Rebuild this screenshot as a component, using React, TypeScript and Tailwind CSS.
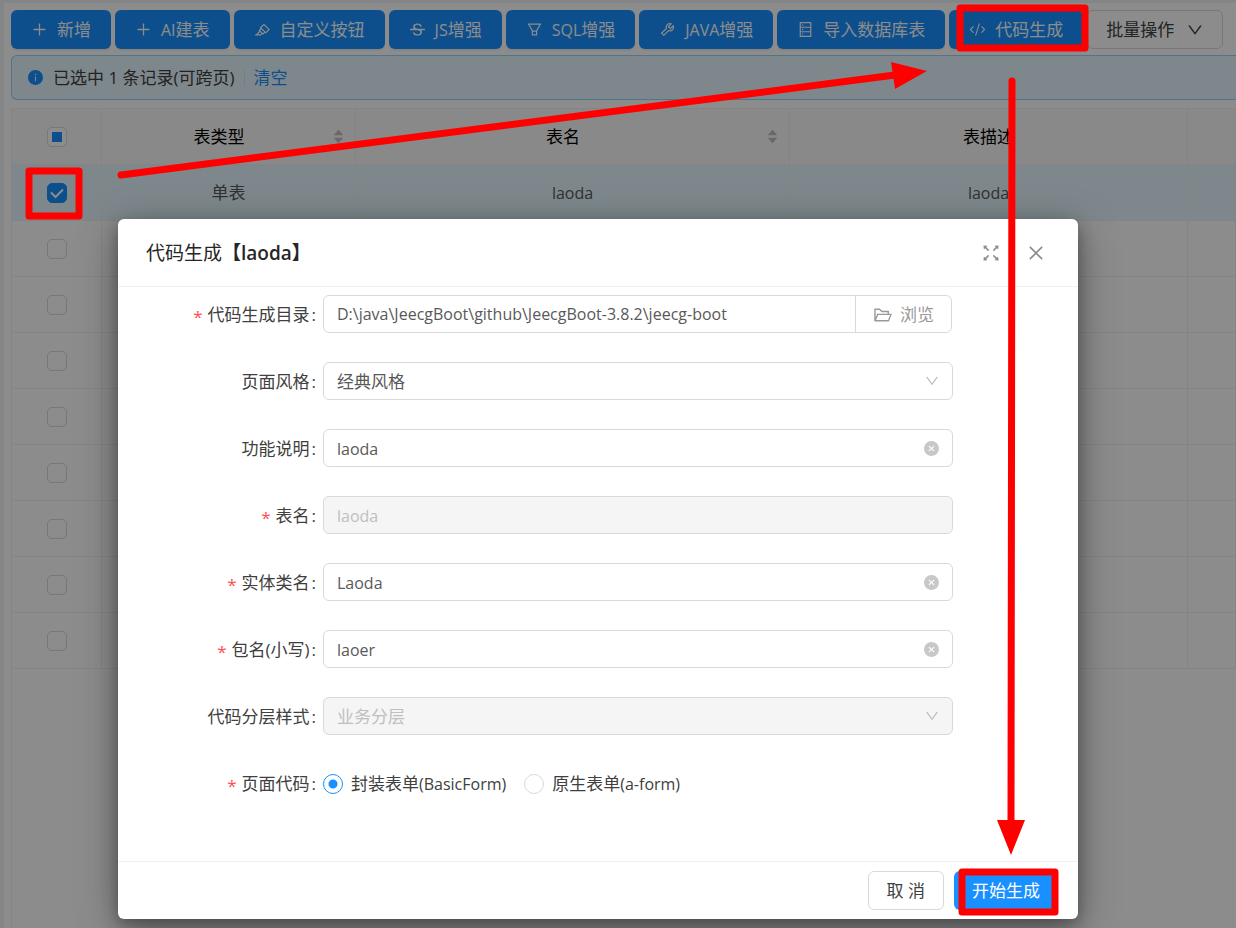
import { useState } from 'react';
import type { ReactNode } from 'react';
import type { IconType } from 'react-icons';
import {
  AiFillCaretDown,
  AiFillCaretUp,
  AiFillCloseCircle,
  AiFillInfoCircle,
  AiOutlineClose,
  AiOutlineDatabase,
  AiOutlineDown,
  AiOutlineFilter,
  AiOutlineFolderOpen,
  AiOutlineFullscreen,
  AiOutlineHighlight,
  AiOutlinePlus,
  AiOutlineStrikethrough,
  AiOutlineTool,
} from 'react-icons/ai';
import { CodeXml } from 'lucide-react';

interface ToolbarAction {
  prefix?: string;
  label: string;
  icon: IconType | typeof CodeXml;
}

const ACTIONS: ToolbarAction[] = [
  { label: '新增', icon: AiOutlinePlus },
  { prefix: 'AI', label: '建表', icon: AiOutlinePlus },
  { label: '自定义按钮', icon: AiOutlineHighlight },
  { prefix: 'JS', label: '增强', icon: AiOutlineStrikethrough },
  { prefix: 'SQL', label: '增强', icon: AiOutlineFilter },
  { prefix: 'JAVA', label: '增强', icon: AiOutlineTool },
  { label: '导入数据库表', icon: AiOutlineDatabase },
  { label: '代码生成', icon: CodeXml },
];

const EMPTY_ROWS = [2, 3, 4, 5, 6, 7, 8, 9];

const CELL = 'border-r border-b border-[#f0f0f0]';
const FIELD =
  'h-[38px] w-full rounded-md border border-[#d9d9d9] bg-white px-[13px] text-base text-[#595959] outline-none disabled:bg-[#f5f5f5] disabled:text-[#bfbfbf] disabled:opacity-100';

function Toolbar() {
  return (
    <div className="flex gap-1 whitespace-nowrap">
      {ACTIONS.map(({ prefix, label, icon: Icon }) => (
        <button
          key={`${prefix}${label}`}
          type="button"
          className="flex h-[39px] shrink-0 items-center gap-[9px] rounded-md bg-[#1890ff] px-5 text-white shadow-[0_2px_0_rgba(0,0,0,0.05)]"
        >
          <Icon className="size-[17px]" strokeWidth={Icon === CodeXml ? 1.5 : 0} />
          <span>
            {prefix && <span className="text-base">{prefix}</span>}
            {label}
          </span>
        </button>
      ))}
      <button
        type="button"
        className="flex h-[39px] shrink-0 items-center gap-3 rounded-md border border-[#d9d9d9] bg-white px-[18px] text-[#404040]"
      >
        批量操作
        <AiOutlineDown className="size-[18px]" />
      </button>
    </div>
  );
}

function SelectionNotice() {
  return (
    <div className="mt-1.5 flex h-[45px] items-center whitespace-nowrap rounded-l-md border border-r-0 border-[#91d5ff] bg-[#e6f7ff] pl-[15px] text-[#404040]">
      <AiFillInfoCircle className="mr-[9px] size-[17px] text-[#1890ff]" />
      已选中 1 条记录(可跨页)
      <span className="mx-[9px] h-4 w-px bg-[#d9e4ea]" />
      <a href="#clear" className="text-[#1890ff]">
        清空
      </a>
    </div>
  );
}

function RowCheckbox({ label, checked = false }: { label: string; checked?: boolean }) {
  return (
    <span className="relative mx-auto block size-5">
      <input
        type="checkbox"
        aria-label={label}
        defaultChecked={checked}
        className="peer block size-5 appearance-none rounded-[5px] border border-[#d9d9d9] bg-white checked:border-[#1890ff] checked:bg-[#1890ff]"
      />
      <svg
        viewBox="0 0 20 20"
        className="pointer-events-none absolute inset-0 hidden size-5 fill-none stroke-white stroke-2 peer-checked:block"
      >
        <path d="M4 9.500 8.500 14 16 6.500" />
      </svg>
    </span>
  );
}

function Sorter() {
  return (
    <span className="flex w-[11px] flex-col items-center text-[#bfbfbf]">
      <AiFillCaretUp className="size-[13px]" />
      <AiFillCaretDown className="-mt-[5px] size-[13px]" />
    </span>
  );
}

function HeaderCell({ children }: { children: ReactNode }) {
  return (
    <div className="flex items-center gap-1 pr-[11px] pl-[7px]">
      <span className="flex-1 text-center">{children}</span>
      <Sorter />
    </div>
  );
}

function DataTable() {
  return (
    <div className="mt-2 flex-1 border-t border-l border-[#f0f0f0]">
      <table className="w-full table-fixed border-separate border-spacing-0 text-center">
        <colgroup>
          <col className="w-[90px]" />
          <col className="w-[254px]" />
          <col className="w-[434px]" />
          <col className="w-[398px]" />
          <col />
        </colgroup>
        <thead>
          <tr className="h-14 bg-[#fafafa] text-black">
            <th className={CELL}>
              <span className="relative mx-auto block size-5">
                <input
                  type="checkbox"
                  aria-label="全选"
                  className="block size-5 appearance-none rounded-[5px] border border-[#d9d9d9] bg-white"
                />
                <span className="pointer-events-none absolute inset-[5px] bg-[#1890ff]" />
              </span>
            </th>
            <th className={`${CELL} font-normal`}>
              <HeaderCell>表类型</HeaderCell>
            </th>
            <th className={`${CELL} font-normal`}>
              <HeaderCell>表名</HeaderCell>
            </th>
            <th className={`${CELL} font-normal`}>表描述</th>
            <th className={CELL} />
          </tr>
        </thead>
        <tbody>
          <tr className="h-14 bg-[#e6f7ff] text-[#595959]">
            <td className={CELL}>
              <RowCheckbox label="选择第 1 行" checked />
            </td>
            <td className={CELL}>单表</td>
            <td className={`${CELL} text-base`}>laoda</td>
            <td className={`${CELL} text-base`}>laoda</td>
            <td className={CELL} />
          </tr>
          {EMPTY_ROWS.map((row) => (
            <tr key={row} className="h-14">
              <td className={CELL}>
                <RowCheckbox label={`选择第 ${row} 行`} />
              </td>
              <td className={CELL} />
              <td className={CELL} />
              <td className={CELL} />
              <td className={CELL} />
            </tr>
          ))}
        </tbody>
      </table>
    </div>
  );
}

interface FormRowProps {
  label: string;
  htmlFor?: string;
  required?: boolean;
  children: ReactNode;
}

function FormRow({ label, htmlFor, required, children }: FormRowProps) {
  return (
    <div className="flex min-h-[38px] items-center">
      <label
        htmlFor={htmlFor}
        className="flex w-[205px] shrink-0 items-center justify-end pt-0.5 pr-[7px] text-[#404040]"
      >
        {required && <span className="mt-1 mr-[5px] text-[#ff4d4f]">*</span>}
        {label}
        <span className="ml-0.5">:</span>
      </label>
      <div className="relative min-w-0 flex-1">{children}</div>
    </div>
  );
}

function ClearableInput({ id, initial }: { id: string; initial: string }) {
  const [value, setValue] = useState(initial);

  return (
    <>
      <input
        id={id}
        value={value}
        onChange={(e) => setValue(e.target.value)}
        className={`${FIELD} pt-0.5`}
      />
      <button
        type="button"
        aria-label="清除"
        onClick={() => setValue('')}
        className="absolute inset-y-0 right-[13px] my-auto size-[17px] text-[#c8c8c8]"
      >
        <AiFillCloseCircle className="size-[17px]" />
      </button>
    </>
  );
}

function SelectField({ id, option, disabled }: { id: string; option: string; disabled?: boolean }) {
  return (
    <>
      <select id={id} disabled={disabled} className={`${FIELD} appearance-none pt-0.5 text-[17px]`}>
        <option>{option}</option>
      </select>
      <AiOutlineDown className="pointer-events-none absolute inset-y-0 right-[13px] my-auto size-4 text-[#bfbfbf]" />
    </>
  );
}

function RadioOption({ value, label, checked }: { value: string; label: string; checked?: boolean }) {
  return (
    <label className="flex items-center gap-2 whitespace-nowrap text-[#404040]">
      <input
        type="radio"
        name="pageCode"
        value={value}
        defaultChecked={checked}
        className="size-5 appearance-none rounded-full border border-[#d9d9d9] bg-white checked:border-[#1890ff] checked:bg-[radial-gradient(circle,#1890ff_4px,#fff_5px)]"
      />
      <span>
        {label}
        <span className="text-base">({value})</span>
      </span>
    </label>
  );
}

function CodeGenerateModal() {
  return (
    <div
      role="dialog"
      aria-labelledby="modal-title"
      className="flex min-h-[700px] w-full max-w-[960px] flex-col rounded-md bg-white shadow-[0_6px_16px_rgba(0,0,0,0.3),0_9px_40px_rgba(0,0,0,0.35)]"
    >
      <header className="flex h-[68px] items-center border-b border-[#f0f0f0] pr-8 pl-7">
        <h2 id="modal-title" className="flex-1 text-[19px] text-[#262626]">
          代码生成<span className="font-semibold">【</span>
          <span className="font-semibold">laoda</span>
          <span className="font-semibold">】</span>
        </h2>
        <button type="button" aria-label="全屏" className="mr-6 text-[#8c8c8c]">
          <AiOutlineFullscreen className="size-[22px]" />
        </button>
        <button type="button" aria-label="关闭" className="text-[#8c8c8c]">
          <AiOutlineClose className="size-5" />
        </button>
      </header>

      <form className="flex flex-1 flex-col gap-[29px] pt-2 pr-[125px]">
        <FormRow label="代码生成目录" htmlFor="path" required>
          <div className="flex pr-px">
            <input
              id="path"
              defaultValue="D:\java\JeecgBoot\github\JeecgBoot-3.8.2\jeecg-boot"
              className={`${FIELD} min-w-0 flex-1 rounded-r-none`}
            />
            <button
              type="button"
              className="-ml-px flex h-[38px] shrink-0 items-center gap-[7px] rounded-r-md border border-[#d9d9d9] px-[17px] pt-0.5 text-[#999]"
            >
              <AiOutlineFolderOpen className="size-5" />
              浏览
            </button>
          </div>
        </FormRow>
        <FormRow label="页面风格" htmlFor="style">
          <SelectField id="style" option="经典风格" />
        </FormRow>
        <FormRow label="功能说明" htmlFor="description">
          <ClearableInput id="description" initial="laoda" />
        </FormRow>
        <FormRow label="表名" htmlFor="tableName" required>
          <input id="tableName" disabled defaultValue="laoda" className={`${FIELD} pt-0.5`} />
        </FormRow>
        <FormRow label="实体类名" htmlFor="entityName" required>
          <ClearableInput id="entityName" initial="Laoda" />
        </FormRow>
        <FormRow label="包名(小写)" htmlFor="packageName" required>
          <ClearableInput id="packageName" initial="laoer" />
        </FormRow>
        <FormRow label="代码分层样式" htmlFor="layer">
          <SelectField id="layer" option="业务分层" disabled />
        </FormRow>
        <FormRow label="页面代码" required>
          <div className="flex gap-[18px] pt-0.5">
            <RadioOption value="BasicForm" label="封装表单" checked />
            <RadioOption value="a-form" label="原生表单" />
          </div>
        </FormRow>
      </form>

      <footer className="flex h-[58px] items-center justify-end gap-[10px] border-t border-[#f0f0f0] px-5">
        <button
          type="button"
          className="h-[39px] rounded-md border border-[#d9d9d9] px-[18px] text-[#404040]"
        >
          取 消
        </button>
        <button type="button" className="h-[39px] rounded-md bg-[#1890ff] px-[18px] text-white">
          开始生成
        </button>
      </footer>
    </div>
  );
}

// Red boxes and arrows that walk through the steps
function GuideMarks() {
  return (
    <svg
      width="1236"
      height="928"
      className="pointer-events-none absolute top-0 left-0 fill-none stroke-[#f00] stroke-[7]"
      strokeLinejoin="round"
      strokeLinecap="round"
      aria-hidden="true"
    >
      <rect x="29" y="171" width="50" height="45" />
      <rect x="960" y="8" width="125" height="40" />
      <rect x="962" y="872" width="93" height="40" />
      <path d="M121 175 895 75" />
      <path d="M1012 81 1011 825" />
      <path d="M891 62 927 71 895 89Z" className="fill-[#f00] stroke-none" />
      <path d="M997 820H1025L1011 855Z" className="fill-[#f00] stroke-none" />
    </svg>
  );
}

export default function App() {
  return (
    <div className="relative h-screen overflow-hidden bg-[#f0f2f5] pt-[3px] pl-1 font-['Open_Sans','Noto_Sans_CJK_SC',sans-serif] text-[17px] leading-6">
      <main className="flex h-full flex-col bg-white pt-[7px] pl-[7px]">
        <Toolbar />
        <SelectionNotice />
        <DataTable />
      </main>
      <div className="absolute inset-0 flex items-start justify-center bg-black/45 pt-[219px] pr-10">
        <CodeGenerateModal />
      </div>
      <GuideMarks />
    </div>
  );
}
